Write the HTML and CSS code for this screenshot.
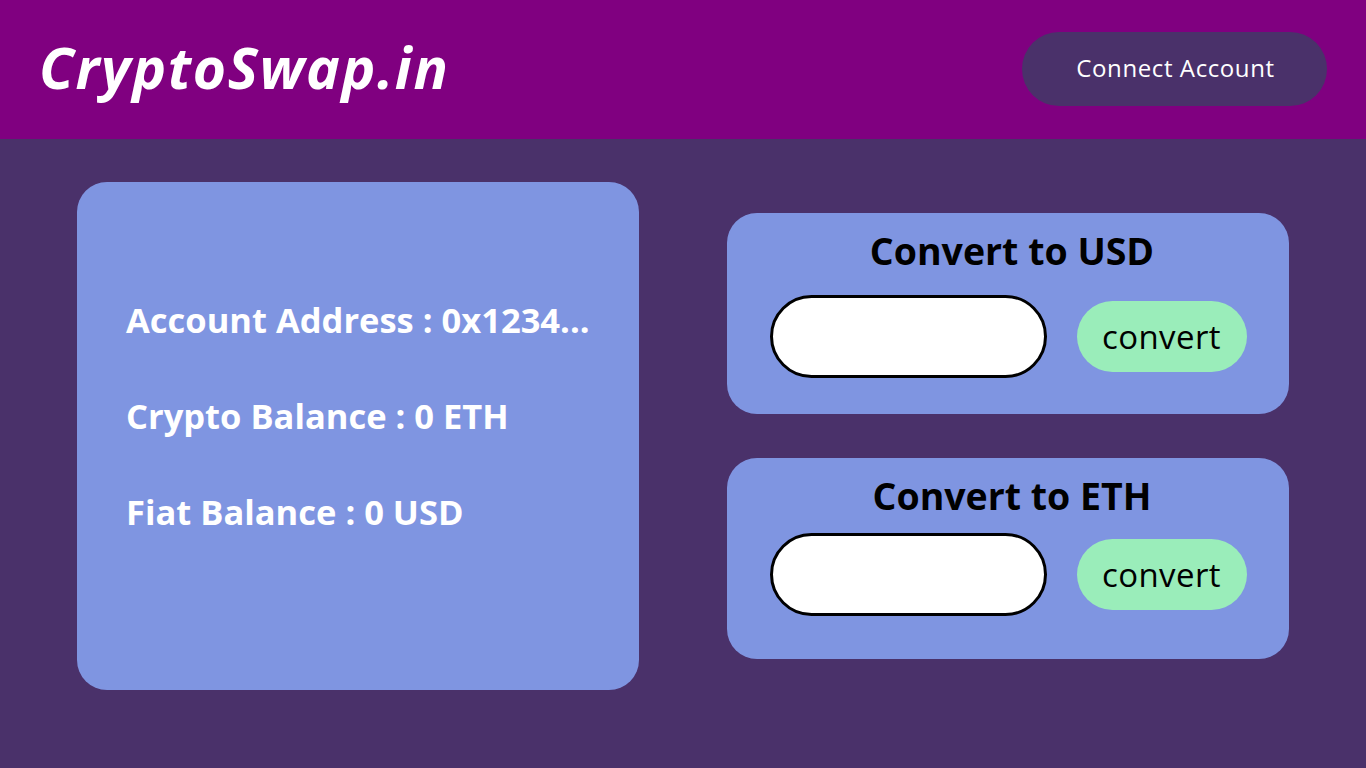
FILE: index.html
```html
<!DOCTYPE html>
<html lang="en">
<head>
<meta charset="utf-8">
<title>CryptoSwap.in</title>
<link rel="stylesheet" href="styles.css">
</head>
<body>
<header class="topbar">
  <h1 class="logo">CryptoSwap.in</h1>
  <button class="connect-btn">Connect Account</button>
</header>
<main class="content">
  <section class="account-card">
    <p class="info-line">Account Address : 0x1234...</p>
    <p class="info-line">Crypto Balance : 0 ETH</p>
    <p class="info-line">Fiat Balance : 0 USD</p>
  </section>
  <section class="convert-column">
    <div class="convert-card convert-usd">
      <h2 class="convert-title">Convert to USD</h2>
      <div class="convert-row">
        <input class="convert-input" type="text">
        <button class="convert-btn">convert</button>
      </div>
    </div>
    <div class="convert-card convert-eth">
      <h2 class="convert-title">Convert to ETH</h2>
      <div class="convert-row">
        <input class="convert-input" type="text">
        <button class="convert-btn">convert</button>
      </div>
    </div>
  </section>
</main>
</body>
</html>
```
FILE: styles.css
```css
* { box-sizing: border-box; }
html, body { margin: 0; padding: 0; }
body {
  width: 1366px;
  height: 768px;
  background: #4a316a;
  font-family: "Open Sans", "Liberation Sans", sans-serif;
  overflow: hidden;
}
.topbar {
  height: 139px;
  background: #800080;
  display: flex;
  align-items: center;
  justify-content: space-between;
  padding: 0 39px 0 39px;
}
.logo {
  margin: 0;
  color: #fff;
  font-family: "Open Sans", sans-serif;
  font-weight: 700;
  font-style: italic;
  font-size: 57px;
  letter-spacing: 1.6px;
  line-height: 1;
  margin-top: -4px;
}
.connect-btn {
  width: 305px;
  height: 74px;
  border: none;
  border-radius: 37px;
  background: #4a316a;
  color: #fff;
  font-family: "Open Sans", sans-serif;
  font-size: 24px;
  font-weight: 400;
  letter-spacing: 0.6px;
  margin-top: -1px;
  padding: 0 0 4px 2px;
}
.content {
  display: flex;
  align-items: center;
  gap: 88px;
  padding: 43px 0 0 77px;
}
.account-card {
  width: 562px;
  height: 508px;
  background: #7f95e1;
  border-radius: 30px;
  display: flex;
  flex-direction: column;
  justify-content: center;
  gap: 52px;
  padding: 0 0 40px 49px;
}
.info-line {
  margin: 0;
  color: #fff;
  font-size: 34.5px;
  font-weight: 700;
  line-height: 44px;
  white-space: nowrap;
}
.convert-column {
  display: flex;
  flex-direction: column;
  gap: 44px;
}
.convert-card {
  width: 562px;
  height: 201px;
  background: #7f95e1;
  border-radius: 30px;
  display: flex;
  flex-direction: column;
  align-items: center;
  padding-top: 16px;
}
.convert-title {
  margin: 0;
  padding-left: 8px;
  font-size: 37.5px;
  font-weight: 700;
  color: #000;
  line-height: 44px;
}
.convert-row {
  display: flex;
  align-items: center;
  gap: 30px;
  margin-top: 22px;
}
.convert-eth .convert-row {
  margin-top: 15px;
}
.convert-input {
  width: 277px;
  height: 83px;
  border: 3px solid #000;
  border-radius: 42px;
  background: #fff;
  outline: none;
}
.convert-btn {
  width: 170px;
  height: 71px;
  border: none;
  border-radius: 36px;
  background: #9aedba;
  color: #000;
  font-family: "Open Sans", sans-serif;
  font-size: 33px;
  font-weight: 400;
  letter-spacing: 0.4px;
  padding: 0;
}
```
